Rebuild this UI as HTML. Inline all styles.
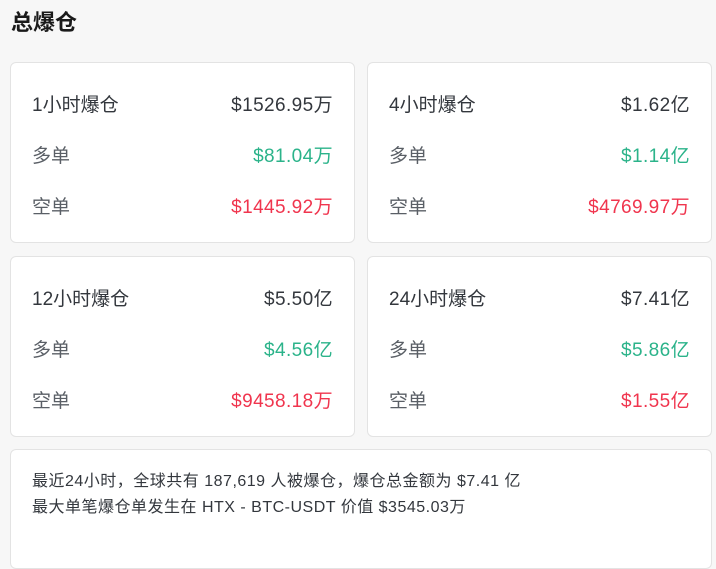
<!DOCTYPE html>
<html><head><meta charset="utf-8"><style>
body{margin:0;width:716px;height:534px;background:#f7f7f7;font-family:"Liberation Sans","Noto Sans CJK SC",sans-serif;overflow:hidden;position:relative}
h1{position:absolute;left:11px;top:8px;margin:0;font-size:22px;font-weight:bold;color:#1a1a1a;line-height:30px}
.card{position:absolute;background:#fff;border:1px solid #e3e3e3;border-radius:6px;box-sizing:border-box}
.row{position:absolute;left:21px;right:21px;height:26px;line-height:26px;font-size:19px;color:#5a5f66;display:flex;justify-content:space-between}
.row .v{color:#33373d;letter-spacing:0.4px}
.g{color:#2bb38a!important}.r{color:#f0354e!important}
.t{color:#33373d}
.b{position:absolute;left:21px;font-size:16px;letter-spacing:0.5px;color:#33373d;line-height:20px;white-space:nowrap}
</style></head><body>
<h1>总爆仓</h1>
<div class="card" style="left:10px;top:62px;width:345px;height:181px">
<div class="row" style="top:30px"><span class="t">1小时爆仓</span><span class="v">$1526.95万</span></div>
<div class="row" style="top:81px"><span>多单</span><span class="v g">$81.04万</span></div>
<div class="row" style="top:132px"><span>空单</span><span class="v r">$1445.92万</span></div>
</div>
<div class="card" style="left:367px;top:62px;width:345px;height:181px">
<div class="row" style="top:30px"><span class="t">4小时爆仓</span><span class="v">$1.62亿</span></div>
<div class="row" style="top:81px"><span>多单</span><span class="v g">$1.14亿</span></div>
<div class="row" style="top:132px"><span>空单</span><span class="v r">$4769.97万</span></div>
</div>
<div class="card" style="left:10px;top:256px;width:345px;height:181px">
<div class="row" style="top:30px"><span class="t">12小时爆仓</span><span class="v">$5.50亿</span></div>
<div class="row" style="top:81px"><span>多单</span><span class="v g">$4.56亿</span></div>
<div class="row" style="top:132px"><span>空单</span><span class="v r">$9458.18万</span></div>
</div>
<div class="card" style="left:367px;top:256px;width:345px;height:181px">
<div class="row" style="top:30px"><span class="t">24小时爆仓</span><span class="v">$7.41亿</span></div>
<div class="row" style="top:81px"><span>多单</span><span class="v g">$5.86亿</span></div>
<div class="row" style="top:132px"><span>空单</span><span class="v r">$1.55亿</span></div>
</div>
<div class="card" style="left:10px;top:449px;width:702px;height:120px">
<div class="b" style="top:22px">最近24小时，全球共有 187,619 人被爆仓，爆仓总金额为 $7.41 亿</div>
<div class="b" style="top:48px">最大单笔爆仓单发生在 HTX - BTC-USDT 价值 $3545.03万</div>
</div>
</body></html>
